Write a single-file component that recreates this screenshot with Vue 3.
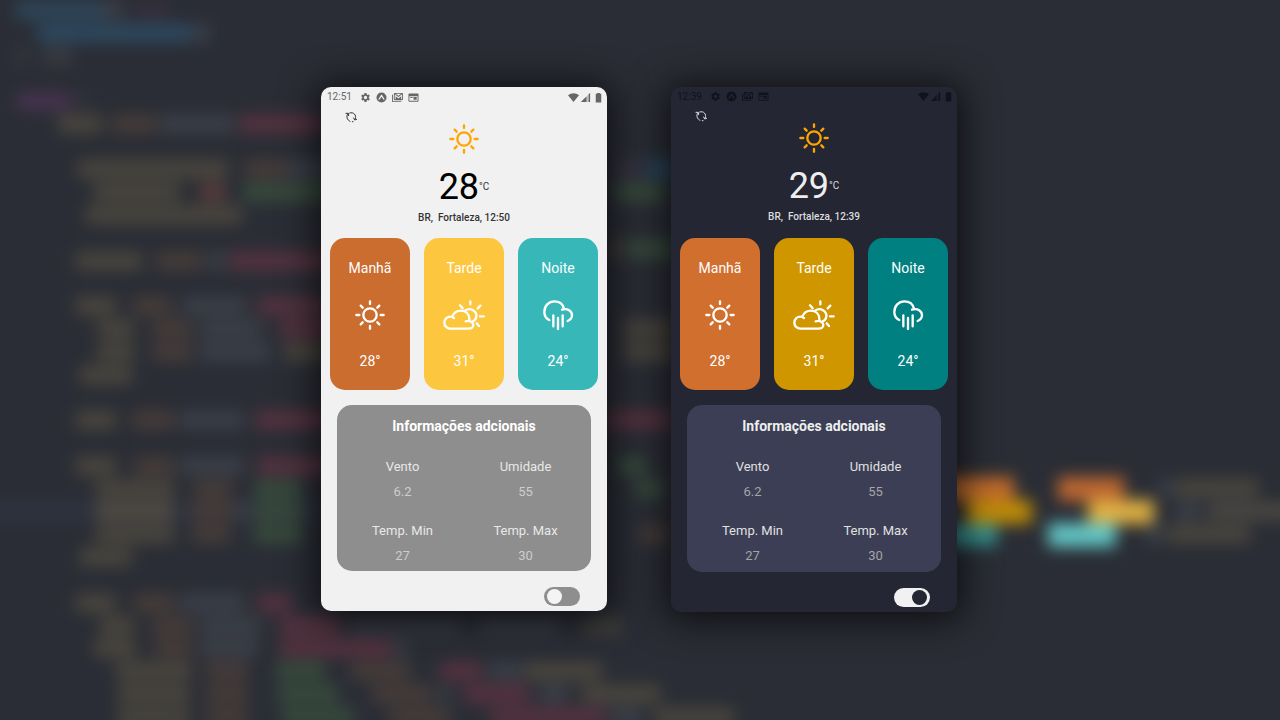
<script setup>
import { reactive } from 'vue'

const phones = reactive([
  { id: 'light', clock: '12:51', temp: '28', place: 'BR,\u00a0 Fortaleza, 12:50', dark: false },
  { id: 'dark', clock: '12:39', temp: '29', place: 'BR,\u00a0 Fortaleza, 12:39', dark: true }
])

const periods = [
  { key: 'morning', label: 'Manhã', value: '28°' },
  { key: 'afternoon', label: 'Tarde', value: '31°' },
  { key: 'night', label: 'Noite', value: '24°' }
]

const details = [
  { label: 'Vento', value: '6.2' },
  { label: 'Umidade', value: '55' },
  { label: 'Temp. Min', value: '27' },
  { label: 'Temp. Max', value: '30' }
]

const Y = '#4a463e'
const O = '#463c39'
const G = '#3b3f48'
const R = '#55323f'
const N = '#374a3c'
const B = '#2e465a'
const P = '#46334f'

// Blurred code lines: [centre y, [x, width, colour], ...]
const lines = [
  [10, [15, 88, B], [103, 20, G], [134, 36, '#352f3c']],
  [33, [37, 155, '#2d4960'], [194, 16, G]],
  [56, [14, 16, '#31343b'], [44, 28, '#393b42']],
  [101, [17, 54, P], [78, 10, '#33343e']],
  [124, [58, 44, Y], [112, 44, O], [160, 74, G], [240, 85, R]],
  [169, [78, 150, Y], [245, 42, O], [288, 50, G], [618, 22, '#3a3342'], [646, 30, '#28455c']],
  [192, [94, 86, Y], [200, 26, '#5a3c3c'], [243, 90, N], [615, 50, N]],
  [215, [86, 156, Y]],
  [261, [76, 66, Y], [156, 46, O], [208, 18, G], [230, 110, R]],
  [249, [610, 12, O], [626, 50, N]],
  [306, [76, 40, Y], [132, 40, O], [182, 64, G], [258, 70, R]],
  [329, [98, 36, Y], [152, 40, O], [200, 62, G], [280, 50, R], [624, 50, Y]],
  [352, [98, 36, Y], [152, 40, O], [200, 70, G], [285, 40, Y], [624, 50, Y]],
  [375, [80, 52, Y]],
  [420, [76, 40, Y], [132, 42, O], [180, 64, G], [256, 80, R], [605, 70, R]],
  [466, [76, 40, Y], [134, 40, O], [180, 64, G], [258, 80, R], [618, 28, N]],
  [489, [96, 78, Y], [194, 38, O], [254, 48, N], [636, 28, N]],
  [511, [96, 78, '#504b43'], [190, 42, O], [236, 12, G], [254, 48, N]],
  [534, [96, 78, Y], [192, 38, O], [254, 48, N], [640, 30, O]],
  [557, [80, 52, Y]],
  [603, [76, 40, Y], [134, 40, O], [180, 64, G], [258, 34, R]],
  [626, [100, 34, Y], [152, 40, O], [200, 60, G], [280, 60, R], [350, 110, '#353942'], [480, 78, '#353942'], [582, 40, '#403d3b']],
  [648, [94, 42, Y], [154, 38, O], [200, 58, G], [280, 112, R], [396, 10, G]],
  [671, [116, 76, Y], [206, 42, O], [276, 48, N], [352, 58, O], [440, 42, R], [490, 30, G], [524, 78, Y]],
  [694, [118, 72, Y], [206, 42, O], [278, 60, N], [372, 60, O], [440, 10, G], [464, 66, R], [540, 28, G], [582, 78, Y]],
  [717, [118, 72, Y], [206, 42, O], [282, 72, N], [390, 60, O], [490, 116, R], [612, 30, G], [654, 80, Y]],
  [488, [1160, 16, G], [1178, 80, Y]],
  [511, [1176, 24, G], [1208, 90, '#4a4743']],
  [534, [1146, 18, G], [1168, 82, Y]]
]

const swatches = [
  [930, 477, 84, 24, '#c06a2c'],
  [966, 500, 66, 24, '#bd8a08'],
  [930, 524, 67, 22, '#348e8c'],
  [1058, 477, 66, 24, '#bd6730'],
  [1088, 500, 66, 24, '#dfb042'],
  [1048, 523, 68, 24, '#62c4c4']
]
</script>

<template>
  <main class="stage">
    <svg class="backdrop" viewBox="0 0 1280 720" preserveAspectRatio="xMidYMid slice" aria-hidden="true">
      <defs>
        <filter id="soft" filterUnits="userSpaceOnUse" x="-40" y="-40" width="1360" height="800" color-interpolation-filters="sRGB">
          <feGaussianBlur stdDeviation="8" />
        </filter>
      </defs>
      <g filter="url(#soft)">
        <rect x="-40" y="-40" width="1360" height="800" fill="#2a2d35" />
        <rect x="-20" y="500" width="340" height="23" fill="#2e323e" />
        <template v-for="([y, ...parts], i) in lines" :key="i">
          <rect v-for="(p, j) in parts" :key="j" :x="p[0]" :y="y - 9" :width="p[1]" height="18" :fill="p[2]" />
        </template>
        <rect v-for="(s, i) in swatches" :key="'s' + i" :x="s[0]" :y="s[1]" :width="s[2]" :height="s[3]" :fill="s[4]" />
      </g>
    </svg>

    <section v-for="phone in phones" :key="phone.id" class="phone" :class="{ dark: phone.dark }">
      <div class="status">
        <span class="clock">{{ phone.clock }}</span>
        <div class="status-left">
          <svg viewBox="0 0 24 24"><path d="M19.14 12.94c.04-.3.06-.61.06-.94 0-.32-.02-.64-.07-.94l2.03-1.58a.49.49 0 0 0 .12-.61l-1.92-3.32a.49.49 0 0 0-.59-.22l-2.39.96c-.5-.38-1.03-.7-1.62-.94l-.36-2.54a.48.48 0 0 0-.48-.41h-3.84a.48.48 0 0 0-.47.41l-.36 2.54c-.59.24-1.13.57-1.62.94l-2.39-.96a.48.48 0 0 0-.59.22L2.74 8.87a.48.48 0 0 0 .12.61l2.03 1.58c-.05.3-.09.63-.09.94s.02.64.07.94l-2.03 1.58a.49.49 0 0 0-.12.61l1.92 3.32c.12.22.37.29.59.22l2.39-.96c.5.38 1.03.7 1.62.94l.36 2.54c.05.24.24.41.48.41h3.84c.24 0 .44-.17.47-.41l.36-2.54c.59-.24 1.13-.56 1.62-.94l2.39.96c.22.08.47 0 .59-.22l1.92-3.32a.48.48 0 0 0-.12-.61zM12 15.6a3.6 3.6 0 1 1 0-7.2 3.6 3.6 0 0 1 0 7.2z" /></svg>
          <svg viewBox="0 0 24 24"><path fill-rule="evenodd" d="M12 1a11 11 0 1 0 0 22 11 11 0 0 0 0-22zM5.500 15.500 10.500 7c.8-1.200 2.200-1.200 3 0l5 8.500c.5 1-1 2.300-2 1.200L12 10.500l-4.500 6.200c-1 1.100-2.500-.2-2-1.200z" /></svg>
          <svg viewBox="0 0 24 24"><path fill-rule="evenodd" d="M2 6H0v14a2 2 0 0 0 2 2h18v-2H2zM6 2a2 2 0 0 0-2 2v12a2 2 0 0 0 2 2h16a2 2 0 0 0 2-2V4a2 2 0 0 0-2-2zM8 4h12l-6 4zM6 5l8 6 8-6v11h-2V9l-6 5-6-5v7H6z" /></svg>
          <svg viewBox="0 0 24 24"><path fill-rule="evenodd" d="M3 3a2 2 0 0 0-2 2v14a2 2 0 0 0 2 2h18a2 2 0 0 0 2-2V5a2 2 0 0 0-2-2zM3 9h18v10H3zM12 11h7v6h-7zM5 11h5v2H5z" /></svg>
        </div>
        <div class="status-right">
          <svg viewBox="0 0 12 12"><path d="M0 3.500C3.500.5 8.500.5 12 3.500L6 11z" /></svg>
          <svg viewBox="0 0 12 12"><path opacity=".35" d="M1 11 11 1v10z" /><path d="M1 11 7 5v6zM9.500 2.500 11 1v10H9.500z" /></svg>
          <svg class="battery" viewBox="0 0 7 12"><path d="M2 1h3v1h1.500v9.500h-6V2H2z" /></svg>
        </div>
      </div>

      <div class="toolbar">
        <button class="refresh" type="button" aria-label="Atualizar">
          <svg viewBox="0 0 36 36" fill="none" stroke="currentColor" stroke-width="3" stroke-linecap="round" stroke-linejoin="round">
            <path d="M8 9c-5 8-2 18 7 22M14 6c12-4 21 6 17 17M22 32h2" />
            <path d="M3 7l7 0 1 7M35 25l-6 2-3-6" />
          </svg>
        </button>
      </div>

      <svg class="now-icon" viewBox="0 0 90 90" fill="none" stroke="currentColor" stroke-width="7" stroke-linecap="round">
        <circle cx="45" cy="45" r="20" />
        <path d="M45 4v8M45 78v8M4 45h9M77 45h9M17 17l6 6M67 67l6 6M17 73l6-6M67 23l6-6" />
      </svg>
      <p class="temperature"><span class="degrees">{{ phone.temp }}</span><span class="unit">°C</span></p>
      <p class="place">{{ phone.place }}</p>

      <div class="periods">
        <article v-for="p in periods" :key="p.key" class="period" :class="p.key">
          <h2>{{ p.label }}</h2>
          <svg v-if="p.key === 'morning'" class="weather" viewBox="0 0 90 90">
            <circle cx="45" cy="45" r="20" />
            <path d="M45 4v8M45 78v8M4 45h9M77 45h9M17 17l6 6M67 67l6 6M17 73l6-6M67 23l6-6" />
          </svg>
          <svg v-else-if="p.key === 'afternoon'" class="weather wide" viewBox="0 0 126 90">
            <path d="M76 86H22a18 18 0 0 1 0-36q6 0 11 4M28 50c4-11 14-18 26-18 14 0 24 10 25 24v5M68 64c13-4 23 3 23 11 0 7-7 11-15 11" />
            <path d="M66 32c17-12 36 2 34 18-1 8-5 12-11 14M82 4v9M51 16l8 9M112 17l-8 8M111 49h11M101 70l7 8" />
          </svg>
          <svg v-else class="weather" viewBox="0 0 90 90">
            <path d="M19 60C8 55 4 46 4 36 4 18 17 4 34 4c15 0 26 9 29 22M57 29c17-5 30 4 30 17 0 9-5 14-13 17" />
            <path d="M31 46v33M45 54v33M59 46v33" />
          </svg>
          <p>{{ p.value }}</p>
        </article>
      </div>

      <section class="panel">
        <h2>Informações adcionais</h2>
        <dl>
          <div v-for="d in details" :key="d.label">
            <dt>{{ d.label }}</dt>
            <dd>{{ d.value }}</dd>
          </div>
        </dl>
      </section>

      <div class="footer">
        <input v-model="phone.dark" class="switch" type="checkbox" role="switch" aria-label="Tema escuro" />
      </div>
    </section>
  </main>
</template>

<style>
html,
body {
  background: #2a2d35;
}
</style>

<style scoped>
.stage {
  position: relative;
  box-sizing: border-box;
  min-height: 100vh;
  padding: 87px 24px 40px 22px;
  display: flex;
  flex-wrap: wrap;
  justify-content: center;
  align-items: flex-start;
  gap: 64px;
  overflow: hidden;
  background: #2a2d35;
  font-family: Roboto, "Liberation Sans", sans-serif;
}
.backdrop {
  position: absolute;
  inset: 0;
  width: 100%;
  height: 100%;
}
.phone {
  --bg: #f1f1f1;
  --ink: #000;
  --soft-ink: #333;
  --status: #666;
  --morning: #ca6d2f;
  --afternoon: #fcc63f;
  --night: #38b7b9;
  --panel: #8e8e8e;
  --title: #fff;
  --label: #e8e8e8;
  --value: #cdcdcd;
  --track: #8e8e8e;
  --knob: #f4f4f4;
  position: relative;
  flex: 0 1 286px;
  display: flex;
  flex-direction: column;
  padding-bottom: 5px;
  border-radius: 10px;
  background: var(--bg);
  color: var(--ink);
  box-shadow: 0 3px 36px 5px rgba(0, 0, 0, 0.7);
}
.phone.dark {
  --bg: #242634;
  --ink: #eee;
  --soft-ink: #ddd;
  --status: #11131b;
  --morning: #d16f2f;
  --afternoon: #d09600;
  --night: #008080;
  --panel: #3b3e54;
  --title: #eee;
  --label: #e0e0e0;
  --value: #a5a5a8;
  --track: #f1f1f1;
  --knob: #242634;
}
svg {
  display: block;
}
p,
h2,
dl,
dd {
  margin: 0;
}
.status {
  height: 20px;
  padding: 0 5px 0 6px;
  display: flex;
  align-items: center;
  color: var(--status);
}
.dark .status {
  height: 19px;
}
.clock {
  font-size: 10px;
  line-height: 20px;
}
.status-left {
  display: flex;
  gap: 5px;
  margin-left: 8px;
}
.status-left svg {
  width: 11px;
  height: 11px;
  fill: currentColor;
}
.status-right {
  display: flex;
  align-items: center;
  gap: 1px;
  margin-left: auto;
}
.status-right svg {
  width: 11px;
  height: 11px;
  fill: currentColor;
}
.status-right .battery {
  width: 7px;
  margin-left: 3px;
}
.toolbar {
  height: 17px;
  padding: 4px 24px 0;
  box-sizing: border-box;
}
.refresh {
  display: block;
  padding: 0;
  border: 0;
  background: none;
  color: var(--soft-ink);
  cursor: pointer;
}
.refresh svg {
  width: 12px;
  height: 12px;
}
.now-icon {
  align-self: center;
  width: 30px;
  height: 30px;
  color: #ffa500;
}
.temperature {
  display: flex;
  justify-content: center;
  align-items: center;
  margin-top: 15px;
}
.degrees {
  font-size: 36px;
  line-height: 36px;
}
.unit {
  font-size: 10px;
  line-height: 12px;
  color: var(--soft-ink);
}
.place {
  margin-top: 6px;
  font-size: 10px;
  line-height: 14px;
  font-weight: 500;
  text-align: center;
  color: var(--soft-ink);
}
.periods {
  display: flex;
  gap: 14px;
  margin-top: 13px;
  padding: 0 9px;
}
.dark .periods {
  margin-top: 14px;
}
.period {
  flex: 1;
  box-sizing: border-box;
  min-height: 152px;
  padding: 20px 0 19px;
  display: flex;
  flex-direction: column;
  align-items: center;
  justify-content: space-between;
  border-radius: 15px;
  color: #fff;
  font-size: 14px;
  line-height: 20px;
}
.period h2 {
  font-size: 14px;
  font-weight: 400;
}
.morning {
  background: var(--morning);
}
.afternoon {
  background: var(--afternoon);
}
.night {
  background: var(--night);
}
.weather {
  width: 30px;
  height: 30px;
  fill: none;
  stroke: currentColor;
  stroke-width: 7;
  stroke-linecap: round;
  stroke-linejoin: round;
  overflow: visible;
}
.weather.wide {
  width: 42px;
}
.panel {
  margin: 15px 16px 0;
  padding: 11px 4px 5px;
  border-radius: 15px;
  background: var(--panel);
  text-align: center;
}
.dark .panel {
  padding-bottom: 6px;
}
.panel h2 {
  font-size: 14px;
  line-height: 20px;
  font-weight: 700;
  color: var(--title);
}
.panel dl {
  display: grid;
  grid-template-columns: 1fr 1fr;
  row-gap: 19px;
  margin-top: 21px;
  font-size: 13px;
  line-height: 20px;
}
.panel dt {
  color: var(--label);
}
.panel dd {
  margin-top: 5px;
  color: var(--value);
}
.footer {
  display: flex;
  justify-content: flex-end;
  margin-top: 16px;
  padding-right: 27px;
}
.switch {
  appearance: none;
  display: flex;
  align-items: center;
  box-sizing: border-box;
  width: 36px;
  height: 19px;
  margin: 0;
  padding: 0 3px;
  border-radius: 10px;
  background: var(--track);
  cursor: pointer;
}
.switch::before {
  content: "";
  width: 15px;
  height: 15px;
  border-radius: 50%;
  background: var(--knob);
}
.switch:checked {
  justify-content: flex-end;
}
</style>
